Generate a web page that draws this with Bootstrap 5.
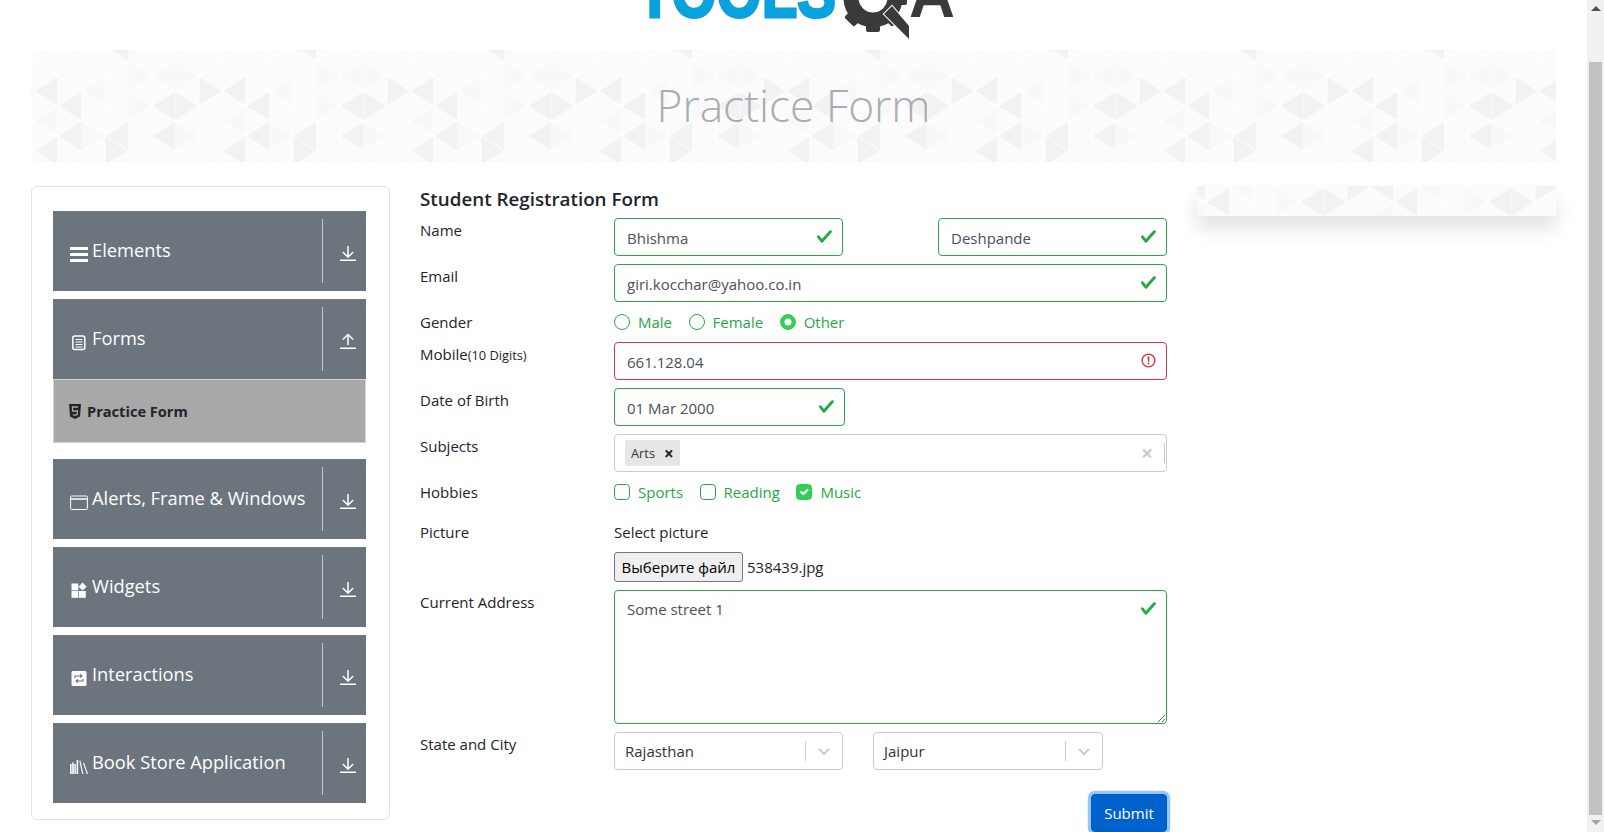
<!DOCTYPE html>
<html lang="en">
<head>
  <title>Practice Form</title>
  <meta charset="utf-8">
  <meta name="viewport" content="width=device-width, initial-scale=1">
  <link href="https://cdn.jsdelivr.net/npm/bootstrap@5.3.0/dist/css/bootstrap.min.css" rel="stylesheet">
  <style>
    :root {
      --tri-bg: url("data:image/svg+xml,%3Csvg xmlns='http://www.w3.org/2000/svg' width='188' height='112'%3E%3Cdefs%3E%3Cpattern id='p' x='3.3' y='11' width='47' height='30' patternUnits='userSpaceOnUse'%3E%3Cpath d='M0 0V30M23.5 0V30M0 0L47 30M0 30L47 0' stroke='%23fff' stroke-width='1' fill='none'/%3E%3C/pattern%3E%3C/defs%3E%3Crect width='188' height='112' fill='%23fbfbfb'/%3E%3Cpath fill='%23f8f8f8' d='M50.3 41L73.8 26V56zM97.3 11L120.8 26L97.3 41zM3.3 71L26.8 56V86zM97.3 41L120.8 56L97.3 71zM144.3 11V41L167.8 26zM50.3 101V71L73.8 86zM167.8 86L144.3 101V71zM120.8 26L144.3 11V41z'/%3E%3Cpath fill='%23f2f2f2' d='M26.8 56L50.3 41V71zM120.8 56L144.3 41V71zM144.3 41V71L167.8 56zM26.8 86L50.3 71V101zM73.8 86L97.3 71V101zM120.8 86L144.3 71V101zM167.8 26V56L191.3 41zM-20.2 26V56L3.3 41zM3.3 41L26.8 26V56zM73.8 86V116L97.3 101zM3.3 101L26.8 86V116zM73.8 -4L97.3 -19V11z'/%3E%3Crect width='188' height='112' fill='url(%23p)'/%3E%3C/svg%3E");
    }
    html, body { height: 832px; overflow: hidden; }
    body { font-family: "Open Sans", "Noto Sans", sans-serif; font-size: 15px; color: #212529; background: #fff; }

    /* page frame and fake scrollbar */
    .page-main { width: 1587px; flex: none; }
    .side-scroll { width: 17px; height: 832px; background: #f1f1f1; flex: none; }
    .scroll-thumb { height: 753px; margin: 0 2px; background: #c1c1c1; }
    .scroll-up { width: 0; height: 0; margin: 6px auto 0; border: 5px solid transparent; border-top: 0; border-bottom-color: #505050; }
    .scroll-dn { width: 0; height: 0; margin: 5px auto 7px; border: 5px solid transparent; border-bottom: 0; border-top-color: #a3a3a3; }

    /* header */
    .logo-strip { height: 50px; overflow: hidden; }
    .logo-strip svg { margin-left: 13px; }
    .logo-word { font-family: "Liberation Sans", sans-serif; font-weight: 700; }
    .page-banner { height: 112px; margin: 0 31px 24px; background: var(--tri-bg) repeat-x 0 0; }
    .page-banner h1 { font-family: "Open Sans", sans-serif; font-weight: 300; font-size: 44.3px; color: #a9adb1; margin: 0; }

    /* sidebar */
    .side-panel { width: 359px; height: 634px; margin-left: 31px; padding: 24px 23px 0 21px; border: 1px solid #dfe2e5; border-radius: 6px; }
    .menu-head { height: 80px; margin-bottom: 8px; padding-left: 17px; background: #6c757d; color: #fff; font-size: 18.3px; }
    .menu-label { margin-top: -2px; }
    .menu-ico { width: 18px; height: 18px; margin-top: 5px; margin-right: 4px; flex: none; }
    .menu-sep { width: 1px; height: 64px; margin-left: auto; background: #c4c8cc; }
    .menu-arrow { width: 16px; height: 16px; margin: 4px 10px 0 17px; flex: none; }
    .menu-sub { height: 64px; margin: -8px 0 16px; padding: 1px 0 0 15px; background: #a8a8a8; border: 1px solid #ced4da; font-size: 14.6px; font-weight: 700; color: #212529; }
    .menu-sub svg { width: 12px; height: 15px; margin-right: 6px; flex: none; }

    /* form */
    .form-area { width: 748px; margin-left: 29px; }
    .form-heading { font-size: 18.8px; font-weight: 600; line-height: 26px; margin: 0 0 6px 1px; color: #212529; }
    .field-row { margin-bottom: 8px; }
    .field-label { width: 195px; flex: none; padding-left: 1px; line-height: 24px; margin: 0; }
    .field-label small { font-size: 12.8px; }
    .field-box { width: 553px; flex: none; }
    .narrow-box { width: 229px; }
    .dob-box { width: 231px; }
    .form-control { height: 38px; padding: 7px 12px 5px; font-size: 15px; color: #495057; border-radius: 4px; }
    .form-control.is-valid { border-color: #28a745; background-image: url("data:image/svg+xml,%3Csvg xmlns='http://www.w3.org/2000/svg' viewBox='0 0 8 8'%3E%3Cpath fill='%2328a745' d='M2.3 6.73L.6 4.53c-.4-1.04.46-1.4 1.1-.8l1.1 1.4 3.4-3.8c.6-.63 1.6-.27 1.2.7l-4 4.6c-.43.5-.8.4-1.1.1z'/%3E%3C/svg%3E"); }
    .form-control.is-invalid { border-color: #dc3545; }
    textarea.form-control.addr-area { height: 134px; min-height: 134px; }
    .tick-row { height: 24px; }
    .tick-row.tall { height: 32px; margin-bottom: 8px; }
    .form-check { margin: 0 16.5px 0 0; padding-left: 24px; min-height: 24px; }
    .form-check .form-check-input { width: 16px; height: 16px; margin: 4px 0 0 -24px; }
    .form-check-label { line-height: 24px; }
    .form-check-input.is-valid { border-color: #28a745; }
    .form-check-input.is-valid:checked { background-color: #34ce57; border-color: #34ce57; }
    .form-check-input.is-valid ~ .form-check-label { color: #28a745; }
    .pic-caption { line-height: 24px; margin-bottom: 8px; }
    .file-btn { width: 129px; height: 30px; padding: 0; font-size: 15px; color: #000; background: #efefef; border: 1px solid #767676; border-radius: 3px; }
    .file-name { margin-left: 4px; color: #212529; }
    .pick-box { height: 38px; border: 1px solid #ccc; border-radius: 4px; background: #fff; color: #333; }
    .tag-chip { height: 26px; margin-left: 10px; padding: 2px 6px 0; background: #e6e6e6; border-radius: 2px; font-size: 12.8px; }
    .tag-chip b { margin-left: 9px; margin-top: -2px; font-size: 17px; line-height: 1; color: #222; }
    .clear-x { margin-left: auto; margin-right: 11px; color: #ccc; font-size: 21px; font-weight: 700; line-height: 1; }
    .pick-end { width: 1px; height: 20px; background: #ccc; margin-right: 1px; }
    .pick-text { padding-left: 10px; }
    .pick-sep { width: 1px; height: 20px; margin-left: auto; background: #ccc; }
    .pick-chev { width: 20px; height: 20px; margin: 0 8px; flex: none; }
    .state-gap { margin-right: 30px; }
    .city-box { width: 230px; }
    .btn.send-btn { width: 76px; height: 38px; margin-top: 24px; padding: 0; font-size: 15px; color: #fff; background: #0062cc; border: 1px solid #005cbf; border-radius: 4px; box-shadow: 0 0 0 3.2px rgba(38, 143, 255, .5); }

    /* right hand ad slot */
    .ad-slot { width: 359px; height: 30px; margin-left: 30px; background: var(--tri-bg) repeat-x -18px -40px; box-shadow: 0 12px 20px rgba(0, 0, 0, .12); }
  </style>
</head>
<body class="d-flex">

<div class="page-main">
  <!-- Logo, scrolled mostly out of view -->
  <div class="logo-strip d-flex justify-content-center align-items-start">
    <svg width="340" height="50" viewBox="0 0 340 50">
      <text class="logo-word" x="7" y="16.5" font-size="72" fill="#0aa2dc" stroke="#0aa2dc" stroke-width="3" textLength="199" lengthAdjust="spacingAndGlyphs">TOOLS</text>
      <g fill="#3a3a3c">
        <circle cx="243" cy="-2" r="22" fill="none" stroke="#3a3a3c" stroke-width="15"/>
        <rect x="236" y="22" width="14" height="10" rx="2"/>
        <rect x="236" y="22" width="14" height="10" rx="2" transform="rotate(45 243 -2)"/>
        <rect x="236" y="22" width="14" height="10" rx="2" transform="rotate(-45 243 -2)"/>
        <rect x="236" y="22" width="14" height="10" rx="2" transform="rotate(-90 243 -2)"/>
        <path d="M254 14L262 6L279 26V39z" stroke="#fff" stroke-width="2" paint-order="stroke"/>
      </g>
      <text class="logo-word" x="279" y="16.5" font-size="66" fill="#3a3a3c" textLength="46" lengthAdjust="spacingAndGlyphs">A</text>
    </svg>
  </div>

  <div class="page-banner d-flex align-items-center justify-content-center">
    <h1>Practice Form</h1>
  </div>

  <div class="d-flex align-items-start">
    <!-- Left menu -->
    <div class="side-panel">
      <div class="menu-head d-flex align-items-center">
        <svg class="menu-ico" viewBox="0 0 18 18" fill="#fff"><rect y="2" width="18" height="3"/><rect y="8" width="18" height="3"/><rect y="14" width="18" height="3"/></svg>
        <span class="menu-label">Elements</span>
        <div class="menu-sep"></div>
        <svg class="menu-arrow" viewBox="0 0 16 16" fill="none" stroke="#fff" stroke-width="1.5"><path d="M0 15.2H16M8 1V12M2.8 7L8 12.2L13.2 7"/></svg>
      </div>

      <div class="menu-head d-flex align-items-center">
        <svg class="menu-ico" viewBox="0 0 18 18" fill="none" stroke="#fff"><rect x="2.8" y="3" width="12" height="13.5" rx="2" stroke-width="1.5"/><path d="M5.5 6.5H12.5M5.5 9H12.5M5.5 11.5H12.5M5.5 14H12.5" stroke-width="1"/></svg>
        <span class="menu-label">Forms</span>
        <div class="menu-sep"></div>
        <svg class="menu-arrow" viewBox="0 0 16 16" fill="none" stroke="#fff" stroke-width="1.5"><path d="M0 15.2H16M8 12V1.5M2.8 6.5L8 1.5L13.2 6.5"/></svg>
      </div>
      <div class="menu-sub d-flex align-items-center">
        <svg viewBox="0 0 12 15"><path fill="#212529" d="M0 0H12L11 12.5L6 15L1 12.5z"/><path fill="none" stroke="#a8a8a8" stroke-width="1.3" d="M9 3H3.4L3.7 7H8.5L8.2 10.5L6 11.3L3.8 10.5"/></svg>
        <span>Practice Form</span>
      </div>

      <div class="menu-head d-flex align-items-center">
        <svg class="menu-ico" viewBox="0 0 18 18" fill="none" stroke="#fff" stroke-width="1"><rect x=".6" y="3" width="16.8" height="13.5" rx="1"/><path d="M.6 6H17.4" stroke-width="1.5"/></svg>
        <span class="menu-label">Alerts, Frame &amp; Windows</span>
        <div class="menu-sep"></div>
        <svg class="menu-arrow" viewBox="0 0 16 16" fill="none" stroke="#fff" stroke-width="1.5"><path d="M0 15.2H16M8 1V12M2.8 7L8 12.2L13.2 7"/></svg>
      </div>

      <div class="menu-head d-flex align-items-center">
        <svg class="menu-ico" viewBox="0 0 18 18" fill="#fff"><rect x="1.5" y="2.5" width="6.8" height="6.8"/><rect x="1.5" y="10" width="6.8" height="6.8"/><rect x="9" y="10" width="6.8" height="6.8"/><path d="M12.5 1.5L16.7 5.7L12.5 9.6L8.6 5.7z"/></svg>
        <span class="menu-label">Widgets</span>
        <div class="menu-sep"></div>
        <svg class="menu-arrow" viewBox="0 0 16 16" fill="none" stroke="#fff" stroke-width="1.5"><path d="M0 15.2H16M8 1V12M2.8 7L8 12.2L13.2 7"/></svg>
      </div>

      <div class="menu-head d-flex align-items-center">
        <svg class="menu-ico" viewBox="0 0 18 18"><rect x="1.5" y="2" width="15" height="15" rx="1.5" fill="#fff"/><path d="M5 9V7H11.5M10 5.4L12 7L10 8.6M13 10V12H6.5M8 10.4L6 12L8 13.6" fill="none" stroke="#6c757d" stroke-width="1.2"/></svg>
        <span class="menu-label">Interactions</span>
        <div class="menu-sep"></div>
        <svg class="menu-arrow" viewBox="0 0 16 16" fill="none" stroke="#fff" stroke-width="1.5"><path d="M0 15.2H16M8 1V12M2.8 7L8 12.2L13.2 7"/></svg>
      </div>

      <div class="menu-head d-flex align-items-center">
        <svg class="menu-ico" viewBox="0 0 18 18" fill="#fff"><rect x="0" y="7" width="1.6" height="10"/><rect x="2.2" y="5.5" width="1.6" height="11.5"/><rect x="4.4" y="7" width="1.4" height="10"/><rect x="6.6" y="3" width="1.6" height="14"/><path d="M9.3 4L10.4 3.6L13.4 17H12.2zM13 6L14 5.6L18 17H16.8z"/></svg>
        <span class="menu-label">Book Store Application</span>
        <div class="menu-sep"></div>
        <svg class="menu-arrow" viewBox="0 0 16 16" fill="none" stroke="#fff" stroke-width="1.5"><path d="M0 15.2H16M8 1V12M2.8 7L8 12.2L13.2 7"/></svg>
      </div>
    </div>

    <!-- Student form -->
    <form class="form-area">
      <h5 class="form-heading">Student Registration Form</h5>

      <div class="d-flex field-row">
        <label class="field-label">Name</label>
        <div class="field-box d-flex justify-content-between">
          <input type="text" class="form-control is-valid narrow-box" value="Bhishma">
          <input type="text" class="form-control is-valid narrow-box" value="Deshpande">
        </div>
      </div>

      <div class="d-flex field-row">
        <label class="field-label">Email</label>
        <div class="field-box"><input type="text" class="form-control is-valid" value="giri.kocchar@yahoo.co.in"></div>
      </div>

      <div class="d-flex field-row tick-row">
        <label class="field-label">Gender</label>
        <div class="field-box d-flex">
          <div class="form-check">
            <input class="form-check-input is-valid" type="radio" name="gender" id="genderMale">
            <label class="form-check-label" for="genderMale">Male</label>
          </div>
          <div class="form-check">
            <input class="form-check-input is-valid" type="radio" name="gender" id="genderFemale">
            <label class="form-check-label" for="genderFemale">Female</label>
          </div>
          <div class="form-check">
            <input class="form-check-input is-valid" type="radio" name="gender" id="genderOther" checked>
            <label class="form-check-label" for="genderOther">Other</label>
          </div>
        </div>
      </div>

      <div class="d-flex field-row">
        <label class="field-label">Mobile<small>(10 Digits)</small></label>
        <div class="field-box"><input type="text" class="form-control is-invalid" value="661.128.04"></div>
      </div>

      <div class="d-flex field-row">
        <label class="field-label">Date of Birth</label>
        <div class="field-box"><input type="text" class="form-control is-valid dob-box" value="01 Mar 2000"></div>
      </div>

      <div class="d-flex field-row">
        <label class="field-label">Subjects</label>
        <div class="field-box pick-box d-flex align-items-center">
          <span class="tag-chip d-flex align-items-center">Arts<b>×</b></span>
          <span class="clear-x">×</span>
          <span class="pick-end"></span>
        </div>
      </div>

      <div class="d-flex tick-row tall">
        <label class="field-label">Hobbies</label>
        <div class="field-box d-flex">
          <div class="form-check">
            <input class="form-check-input is-valid" type="checkbox" id="hobbySports">
            <label class="form-check-label" for="hobbySports">Sports</label>
          </div>
          <div class="form-check">
            <input class="form-check-input is-valid" type="checkbox" id="hobbyReading">
            <label class="form-check-label" for="hobbyReading">Reading</label>
          </div>
          <div class="form-check">
            <input class="form-check-input is-valid" type="checkbox" id="hobbyMusic" checked>
            <label class="form-check-label" for="hobbyMusic">Music</label>
          </div>
        </div>
      </div>

      <div class="d-flex field-row">
        <label class="field-label">Picture</label>
        <div class="field-box">
          <div class="pic-caption">Select picture</div>
          <div class="d-flex align-items-center">
            <button type="button" class="file-btn">Выберите файл</button>
            <span class="file-name">538439.jpg</span>
          </div>
        </div>
      </div>

      <div class="d-flex field-row">
        <label class="field-label">Current Address</label>
        <div class="field-box"><textarea class="form-control is-valid addr-area">Some street 1</textarea></div>
      </div>

      <div class="d-flex">
        <label class="field-label">State and City</label>
        <div class="d-flex">
          <div class="pick-box narrow-box state-gap d-flex align-items-center">
            <span class="pick-text">Rajasthan</span>
            <span class="pick-sep"></span>
            <svg class="pick-chev" viewBox="0 0 20 20" fill="none" stroke="#ccc" stroke-width="2"><path d="M5 8L10 13L15 8"/></svg>
          </div>
          <div class="pick-box city-box d-flex align-items-center">
            <span class="pick-text">Jaipur</span>
            <span class="pick-sep"></span>
            <svg class="pick-chev" viewBox="0 0 20 20" fill="none" stroke="#ccc" stroke-width="2"><path d="M5 8L10 13L15 8"/></svg>
          </div>
        </div>
      </div>

      <div class="d-flex justify-content-end">
        <button type="button" class="btn send-btn">Submit</button>
      </div>
    </form>

    <div class="ad-slot"></div>
  </div>
</div>

<!-- Window scrollbar as seen in the screenshot -->
<div class="side-scroll d-flex flex-column">
  <div class="scroll-up"></div>
  <div class="scroll-thumb mt-auto"></div>
  <div class="scroll-dn"></div>
</div>

<script src="https://cdn.jsdelivr.net/npm/bootstrap@5.3.0/dist/js/bootstrap.bundle.min.js"></script>
</body>
</html>
